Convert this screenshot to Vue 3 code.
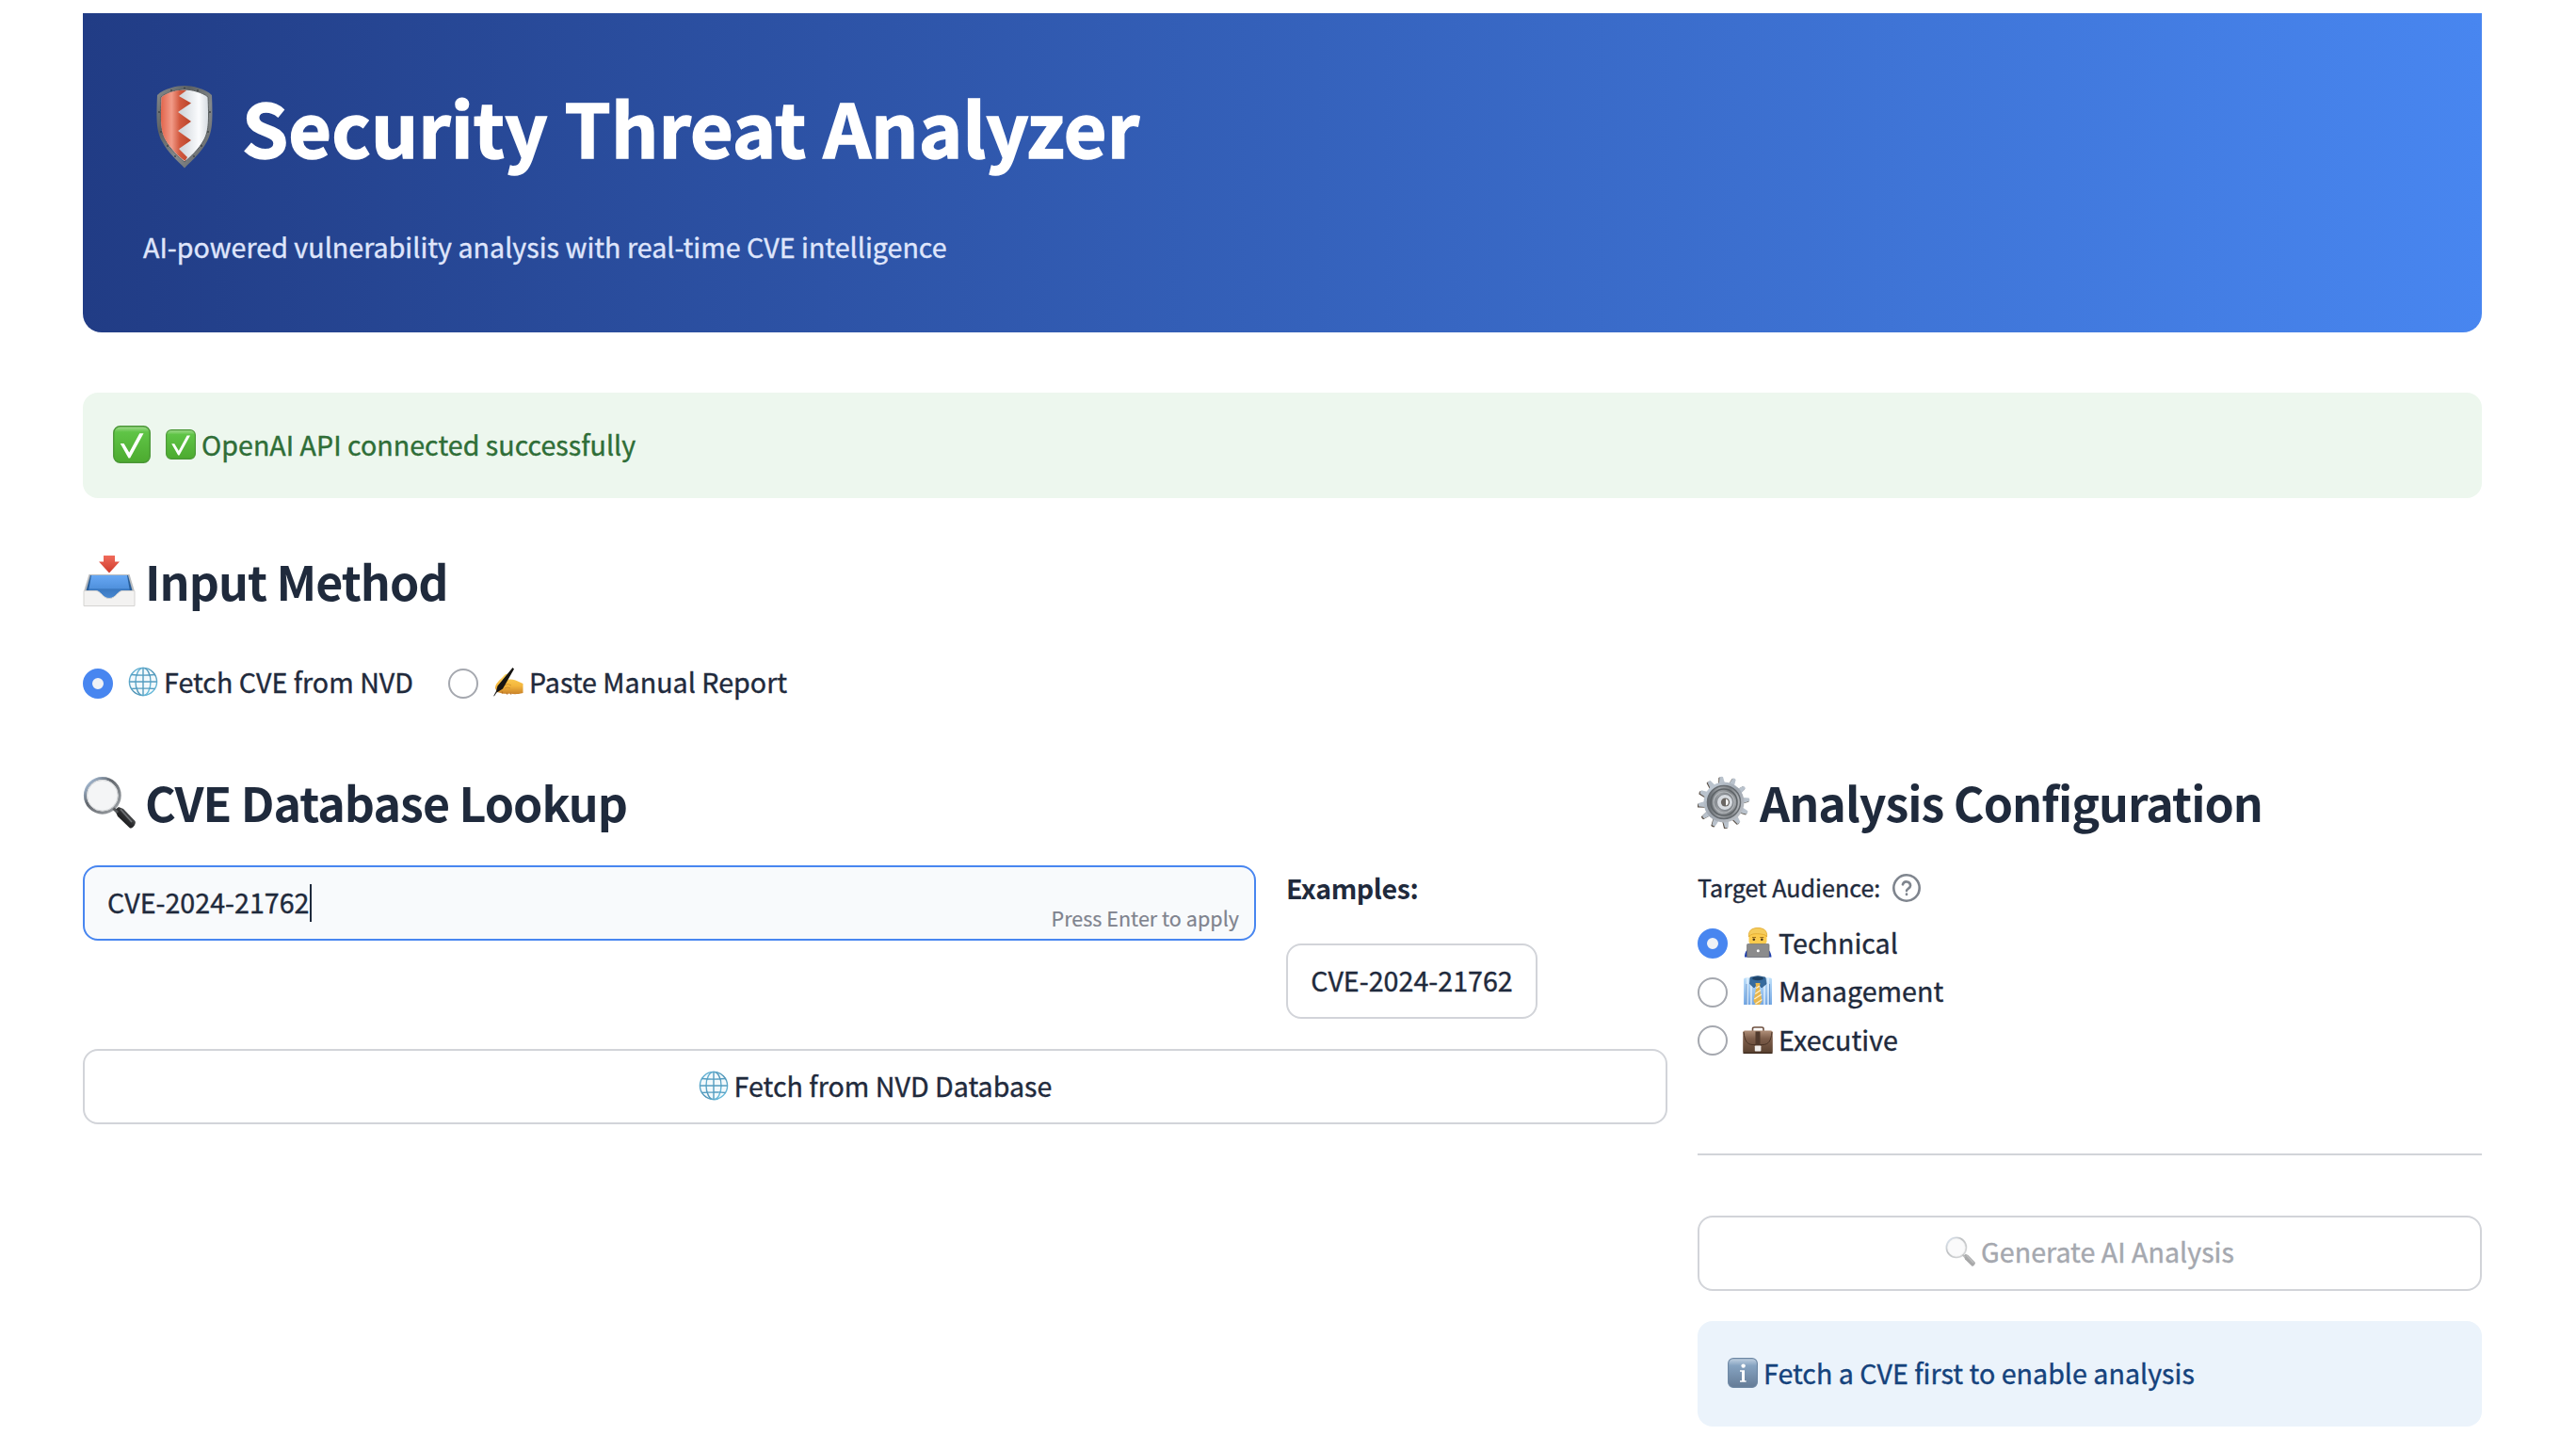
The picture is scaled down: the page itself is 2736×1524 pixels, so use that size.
<script setup>
import { ref } from 'vue'

const cve = ref('CVE-2024-21762')
const method = ref('nvd')
const audience = ref('technical')

const methods = [
  { id: 'nvd', icon: 'globe', label: 'Fetch CVE from NVD' },
  { id: 'manual', icon: 'writing', label: 'Paste Manual Report' },
]
const audiences = [
  { id: 'technical', icon: 'technologist', label: 'Technical' },
  { id: 'management', icon: 'shirt', label: 'Management' },
  { id: 'executive', icon: 'briefcase', label: 'Executive' },
]
const teeth = Array.from({ length: 12 }, (_, i) => i * 30 - 6)
</script>

<template>
  <svg class="defs" aria-hidden="true">
    <defs>
      <linearGradient id="gGreen" x1="0" y1="0" x2="0" y2="1">
        <stop offset="0" stop-color="#a5dd92" /><stop offset=".16" stop-color="#5fc446" /><stop offset="1" stop-color="#4caa2f" />
      </linearGradient>
      <linearGradient id="gInfo" x1="0" y1="0" x2="0" y2="1">
        <stop offset="0" stop-color="#c2d2e2" /><stop offset=".25" stop-color="#86a3c1" /><stop offset="1" stop-color="#647b96" />
      </linearGradient>
      <linearGradient id="gRed" x1="0" y1="0" x2="1" y2="0">
        <stop offset="0" stop-color="#e2654c" /><stop offset=".35" stop-color="#f29b88" /><stop offset=".62" stop-color="#d2593f" /><stop offset="1" stop-color="#b94429" />
      </linearGradient>
      <linearGradient id="gSilver" x1="0" y1="0" x2="1" y2="0">
        <stop offset="0" stop-color="#c2c8cd" /><stop offset=".45" stop-color="#d3d8dd" /><stop offset=".8" stop-color="#fbfcfe" /><stop offset="1" stop-color="#d5dae0" />
      </linearGradient>
      <linearGradient id="gRim" x1="0" y1="0" x2="1" y2="1">
        <stop offset="0" stop-color="#8b8f90" /><stop offset=".3" stop-color="#5c6163" /><stop offset=".6" stop-color="#85898b" /><stop offset="1" stop-color="#585c5e" />
      </linearGradient>
      <linearGradient id="gArrow" x1="0" y1="0" x2="0" y2="1">
        <stop offset="0" stop-color="#f06b5b" /><stop offset="1" stop-color="#cf3a2b" />
      </linearGradient>
      <linearGradient id="gTray" x1="0" y1="0" x2="0" y2="1">
        <stop offset="0" stop-color="#68a8f4" /><stop offset=".55" stop-color="#4f90dc" /><stop offset=".56" stop-color="#3a78c0" /><stop offset="1" stop-color="#4a8ad4" />
      </linearGradient>
      <linearGradient id="gGlobe" x1="0" y1="0" x2="1" y2="1">
        <stop offset="0" stop-color="#67b9dc" /><stop offset=".55" stop-color="#4f93b5" /><stop offset="1" stop-color="#74cdec" />
      </linearGradient>
      <linearGradient id="gHand" x1="0" y1="0" x2="0" y2="1">
        <stop offset="0" stop-color="#ffd65e" /><stop offset=".6" stop-color="#f3b53c" /><stop offset="1" stop-color="#c9822a" />
      </linearGradient>
      <linearGradient id="gHandle" x1="0" y1="1" x2="1" y2="0">
        <stop offset="0" stop-color="#050505" /><stop offset=".5" stop-color="#2a2b2d" /><stop offset="1" stop-color="#8a8c8e" />
      </linearGradient>
      <linearGradient id="gRing" x1="0" y1="0" x2="1" y2="1">
        <stop offset="0" stop-color="#b9d4f3" /><stop offset=".4" stop-color="#62676d" /><stop offset="1" stop-color="#a3a7ab" />
      </linearGradient>
      <linearGradient id="gGear" x1="0" y1="0" x2="1" y2="1">
        <stop offset="0" stop-color="#c9d4df" /><stop offset=".5" stop-color="#a0a7b0" /><stop offset="1" stop-color="#c3c6cb" />
      </linearGradient>
      <linearGradient id="gGearIn" x1="0" y1="0" x2="1" y2="0">
        <stop offset="0" stop-color="#60666c" /><stop offset=".35" stop-color="#9da1a5" /><stop offset=".7" stop-color="#7d8185" /><stop offset="1" stop-color="#b9bdc1" />
      </linearGradient>
      <linearGradient id="gCase" x1="0" y1="0" x2="0" y2="1">
        <stop offset="0" stop-color="#b08f78" /><stop offset=".35" stop-color="#7e5e4b" /><stop offset="1" stop-color="#58402f" />
      </linearGradient>
      <linearGradient id="gShirt" x1="0" y1="0" x2="0" y2="1">
        <stop offset="0" stop-color="#bfe0fb" /><stop offset="1" stop-color="#75a8e4" />
      </linearGradient>

      <symbol id="shield" viewBox="0 0 88 88">
        <path d="M44 0C36 0 22 3 15 10C14 36 14 48 20 59C26 71 36 79 44 87.500C52 79 62 71 68 59C74 48 74 36 73 10C66 3 52 0 44 0Z" fill="url(#gRim)" />
        <path d="M44 4C37 4 25 7 19 12C18 36 18 47 23 57C29 68 38 76 44 81C50 76 59 68 65 57C70 47 70 36 69 12C63 7 51 4 44 4Z" fill="url(#gSilver)" stroke="#5a5f61" stroke-width="1" />
        <path d="M46 5C37 4 25 7 19.500 12.500C18.500 36 18.500 47 23.500 57C29 67 38 75 44.500 80L47 76L38 67L51 58L37 48L51 38L37 28L51 18.500L38 11Z" fill="url(#gRed)" />
        <g fill="#3c4042"><circle cx="44" cy="2.500" r=".9" /><circle cx="30" cy="5" r=".9" /><circle cx="58" cy="5" r=".9" /><circle cx="17" cy="28" r=".9" /><circle cx="71" cy="28" r=".9" /><circle cx="19" cy="49" r=".9" /><circle cx="69" cy="49" r=".9" /><circle cx="26" cy="64" r=".9" /><circle cx="62" cy="64" r=".9" /><circle cx="34" cy="75" r=".9" /><circle cx="54" cy="75" r=".9" /></g>
      </symbol>

      <symbol id="check" viewBox="0 0 32 32">
        <rect x=".6" y=".6" width="30.800" height="30.800" rx="5.500" fill="url(#gGreen)" stroke="#4a9636" stroke-width="1.100" />
        <path d="M6.200 15.200H9.300L13.800 22.800L22.600 6.500H26L14.500 27.500H13.200Z" fill="#fff" />
      </symbol>

      <symbol id="info" viewBox="0 0 32 32">
        <rect x=".6" y=".6" width="30.800" height="30.800" rx="5.500" fill="url(#gInfo)" stroke="#6c86a3" stroke-width="1.100" />
        <circle cx="16.600" cy="8.600" r="2.200" fill="#fff" />
        <path d="M13 13.200H18V24.200H19.600V25.800H13V24.200H15V14.800H13Z" fill="#fff" />
      </symbol>

      <symbol id="inbox" viewBox="0 0 56 56">
        <path d="M6.500 21H49.500L55 39V47H1V39Z" fill="#b9bcbf" />
        <path d="M8 22H48L53 40H3Z" fill="#285d98" />
        <path d="M9 22H47L50 39L40 48H16L6 39Z" fill="url(#gTray)" />
        <path d="M1 38.500H14C19 38.500 21 46.500 28 46.500C35 46.500 37 38.500 42 38.500H55V54.500H1Z" fill="#f3f2f1" stroke="#d5d4d2" stroke-width="1" />
        <path d="M22 1H34V7.500H39L28 19.500L17 7.500H22Z" fill="url(#gArrow)" />
      </symbol>

      <symbol id="globe" viewBox="0 0 32 32">
        <circle cx="16" cy="16" r="14.800" fill="#f2f9fc" />
        <g fill="none" stroke="url(#gGlobe)" stroke-width="1.400">
          <circle cx="16" cy="16" r="14.600" /><ellipse cx="16" cy="16" rx="8" ry="14.600" />
        </g>
        <path d="M16 1.400V30.600M1.400 16H30.600M3.500 8.500Q16 9.800 28.500 8.500M3.500 23.500Q16 22.200 28.500 23.500" fill="none" stroke="#559dc0" stroke-width="1.400" />
      </symbol>

      <symbol id="writing" viewBox="0 0 32 32">
        <path d="M2 23C2 18 6 15 10 11C12 8 14 7 16 8C18 10 16 12 15 14C20 13 23 14 27 16L31.500 18V28C25 29.500 22 29.500 18 28.500C13 29.500 7 28 4 27Z" fill="url(#gHand)" />
        <path d="M9 26.500L10 28.500M14 28L15 29.500M18 28L19 29.500" stroke="#b56f22" stroke-width="1.200" fill="none" />
        <path d="M11 20Q16 17 19 20M12 23Q15 21 18 23" fill="none" stroke="#c98b2b" stroke-width=".8" />
        <path d="M20.500 1L22 2.500L10 23.500L3.500 27.500L.8 31.500L.3 31L3 26L4.500 20.500Z" fill="#161412" />
      </symbol>

      <symbol id="magnifier" viewBox="0 0 56 56">
        <path d="M34 36L38 33L43 35L55.500 48C57 51 53 56 50 55.500L37 43Z" fill="url(#gHandle)" />
        <path d="M40 35.500L52 49" stroke="#707376" stroke-width="1.600" fill="none" />
        <circle cx="20.800" cy="20.800" r="18.300" fill="#f4f5f6" stroke="url(#gRing)" stroke-width="3.200" />
        <circle cx="20.800" cy="20.800" r="16.300" fill="none" stroke="#d5d7d9" stroke-width="1" />
        <path d="M32.500 34.500L37 39" stroke="#55585b" stroke-width="3" />
      </symbol>

      <symbol id="gear" viewBox="0 0 56 56">
        <g fill="#5b5148" transform="translate(-1 .8)">
          <path v-for="a in teeth" :key="'s' + a" d="M25 10L26.200 .8Q28 -.2 29.800 .8L31 10Z" :transform="`rotate(${a} 28 28)`" />
        </g>
        <g fill="#b9c2cc">
          <path v-for="a in teeth" :key="a" d="M24.600 10L26.200 1Q28 0 29.800 1L31.400 10Z" :transform="`rotate(${a} 28 28)`" />
        </g>
        <circle cx="28" cy="28" r="21.500" fill="url(#gGear)" />
        <circle cx="28" cy="28" r="17.500" fill="url(#gGearIn)" stroke="#666b70" stroke-width="1.500" />
        <circle cx="28" cy="28" r="14" fill="none" stroke="#5f6468" stroke-width="1.600" />
        <circle cx="28" cy="28" r="11" fill="none" stroke="#b0b4b8" stroke-width="1.200" />
        <circle cx="29" cy="28" r="8.500" fill="#d7dbe0" stroke="#80858b" stroke-width="1" />
        <circle cx="29.500" cy="28" r="4.600" fill="#6a6663" />
        <path d="M30 24.500A3.600 3.600 0 0 1 30 31.500Z" fill="#fff" />
      </symbol>

      <symbol id="technologist" viewBox="0 0 32 32">
        <path d="M2 31.500C2 26 4 24 6 23H26C28 24 30 26 30.500 31.500Z" fill="#1f3fae" />
        <path d="M6.500 9C6 3 10 .5 16 .5C22 .5 26 3 25.500 9V15C25 21 7 21 6.500 15Z" fill="#fbcb4d" />
        <path d="M6.500 10C5.500 3 10 .5 16 .5C22 .5 26.500 3 25.500 10C24.500 7.500 22 7.500 19 7C15 6.500 8.500 6 6.500 10Z" fill="#f5cc5c" stroke="#d89c20" stroke-width=".6" />
        <circle cx="11.800" cy="12.800" r="1.300" fill="#4a3415" /><circle cx="20.300" cy="12.800" r="1.300" fill="#4a3415" />
        <path d="M10 10.500H14M18.300 10.500H22.300" stroke="#9b6d1b" stroke-width="1" />
        <rect x="4.500" y="17.500" width="23.500" height="14" rx="1" fill="#8b8b8c" stroke="#737374" stroke-width=".7" />
        <circle cx="16.300" cy="24.700" r="1.500" fill="#fff" />
      </symbol>

      <symbol id="shirt" viewBox="0 0 32 32">
        <path d="M1 4Q1 2.500 3 2.500H29Q31 2.500 31 4V31H1Z" fill="url(#gShirt)" />
        <path d="M5 3V31M9 3V31M23 3V31M27 3V31" stroke="#edf6fe" stroke-width="1.300" />
        <path d="M4 9V31M28.500 9V31" stroke="#5687c2" stroke-width=".7" />
        <path d="M8 2Q16 -1 24 2L25 9L20 13L16 8L12 13L7.500 9Z" fill="#376b9e" stroke="#244f7b" stroke-width=".6" />
        <ellipse cx="16" cy="3.200" rx="6" ry="2" fill="#1e4266" />
        <path d="M13.500 8H18.500L17.800 13L20.500 27L18 31H13.500L11.500 27L14.200 13Z" fill="#e8b64c" />
        <path d="M14.200 13.500L18 11M13.200 19.500L19 15.500M12.300 25L20 20M13.500 30L20.500 25.500" stroke="#fff0ca" stroke-width="1.300" />
      </symbol>

      <symbol id="briefcase" viewBox="0 0 32 32">
        <path d="M10.500 7V4.500Q10.500 3 12.500 3H20Q22 3 22 4.500V7" fill="none" stroke="#6e5040" stroke-width="1.600" />
        <rect x=".2" y="6.500" width="31.600" height="24.500" rx="2" fill="url(#gCase)" />
        <path d="M1 8C2 18 5 21 10 21.500H22C27 21 30 18 31 8" fill="none" stroke="#493326" stroke-width="1" />
        <path d="M13.500 7.500H18.500V22H13.500Z" fill="#513a2d" />
        <rect x="12.800" y="22.500" width="6.600" height="6" rx=".8" fill="#f0eeec" />
        <path d="M.5 30.300H31.500" stroke="#3c2a1f" stroke-width="1.200" />
      </symbol>
    </defs>
  </svg>

  <main class="page">
    <header class="hero">
      <h1><svg class="shield"><use href="#shield" /></svg><span>Security Threat Analyzer</span></h1>
      <p>AI-powered vulnerability analysis with real-time CVE intelligence</p>
    </header>

    <div class="alert success">
      <svg class="big"><use href="#check" /></svg>
      <svg class="emoji"><use href="#check" /></svg>
      <span>OpenAI API connected successfully</span>
    </div>

    <h2 class="h-input"><svg><use href="#inbox" /></svg><span>Input Method</span></h2>

    <div class="methods">
      <label v-for="m in methods" :key="m.id" class="radio" @click="method = m.id">
        <span class="dot" :class="{ on: method === m.id }"></span>
        <span class="lbl"><svg class="emoji"><use :href="'#' + m.icon" /></svg><span>{{ m.label }}</span></span>
      </label>
    </div>

    <div class="columns">
      <section class="left">
        <h2><svg><use href="#magnifier" /></svg><span>CVE Database Lookup</span></h2>
        <div class="lookup">
          <div class="field">
            <span class="value">{{ cve }}</span><span class="caret"></span>
            <span class="hint">Press Enter to apply</span>
          </div>
          <div class="examples">
            <strong>Examples:</strong>
            <button class="btn small">CVE-2024-21762</button>
          </div>
        </div>
        <button class="btn fetch"><svg class="emoji"><use href="#globe" /></svg><span>Fetch from NVD Database</span></button>
      </section>

      <section class="right">
        <h2><svg><use href="#gear" /></svg><span>Analysis Configuration</span></h2>
        <div class="audience">
          <span>Target Audience:</span>
          <svg class="help" viewBox="0 0 30 30">
            <circle cx="15" cy="15" r="13.700" />
            <path d="M10.900 11.300A4.200 4.200 0 0 1 19.100 12.500C19.100 15.200 15 16 15 18" />
            <path d="M15 21.600V21.900" />
          </svg>
        </div>
        <div class="options">
          <label v-for="a in audiences" :key="a.id" class="radio" @click="audience = a.id">
            <span class="dot" :class="{ on: audience === a.id }"></span>
            <span class="lbl"><svg class="emoji"><use :href="'#' + a.icon" /></svg><span>{{ a.label }}</span></span>
          </label>
        </div>
        <hr />
        <button class="btn generate" disabled><svg class="emoji"><use href="#magnifier" /></svg><span>Generate AI Analysis</span></button>
        <div class="alert note"><svg class="emoji"><use href="#info" /></svg><span>Fetch a CVE first to enable analysis</span></div>
      </section>
    </div>
  </main>
</template>

<style>
body {
  background: #fff;
}
</style>

<style scoped>
.defs {
  position: absolute;
  width: 0;
  height: 0;
}
.page {
  box-sizing: border-box;
  width: 2736px;
  height: 1524px;
  padding: 14px 100px 0 88px;
  overflow: hidden;
  font-family: "Noto Sans CJK SC", "Noto Sans", sans-serif;
  font-size: 28.6px;
  line-height: 32px;
  letter-spacing: 0.03px;
  color: #1f2a3c;
  white-space: nowrap;
  -webkit-text-stroke-width: 0.4px;
}
h1,
h2,
p {
  margin: 0;
}
svg {
  display: block;
  flex: none;
}
.hero {
  box-sizing: border-box;
  height: 339px;
  padding: 64px;
  border-radius: 0 0 20px 20px;
  background: linear-gradient(90deg, #213c85, #4886f0);
}
h1 {
  display: flex;
  align-items: center;
  gap: 17px;
  height: 112px;
  font-size: 78.8px;
  line-height: 112px;
  letter-spacing: 0.14px;
  -webkit-text-stroke-width: 1.6px;
  color: #fff;
}
.shield {
  width: 88px;
  height: 88px;
  margin-top: 2px;
}
.hero p {
  margin-top: 56px;
  color: #dfe5fb;
}
.alert {
  box-sizing: border-box;
  display: flex;
  align-items: center;
  height: 112px;
  padding: 0 32px 3px;
  border-radius: 16px;
}
.success {
  margin-top: 64px;
  background: #edf7ee;
  color: #2f6e37;
}
.big {
  width: 40px;
  height: 40px;
  margin-right: 16px;
}
.emoji {
  width: 32px;
  height: 32px;
  margin-right: 6px;
}
h2 {
  display: flex;
  align-items: center;
  gap: 11px;
  height: 60px;
  font-size: 50.1px;
  line-height: 60px;
  font-weight: 600;
  letter-spacing: -0.97px;
  -webkit-text-stroke-width: 0;
}
h2 svg {
  width: 56px;
  height: 56px;
}
h2 span {
  margin-left: -1px;
  padding-bottom: 2px;
}
.h-input {
  margin-top: 58px;
}
.methods {
  display: flex;
  gap: 37px;
  margin-top: 63px;
}
.radio {
  display: flex;
  align-items: center;
  gap: 16px;
  height: 32px;
}
.dot {
  box-sizing: border-box;
  width: 32px;
  height: 32px;
  border: 2px solid #a5a8af;
  border-radius: 50%;
}
.dot.on {
  border: 10px solid #4886f0;
  background: #f0f2f6;
}
.lbl {
  display: flex;
  align-items: center;
  padding-bottom: 4px;
}
.options .lbl {
  padding-bottom: 3px;
}
.columns {
  display: flex;
  gap: 32px;
  margin-top: 80px;
}
.left {
  width: 1683px;
}
.right {
  width: 833px;
}
.lookup {
  display: flex;
  gap: 32px;
  height: 163px;
  margin-top: 37px;
}
.field {
  position: relative;
  box-sizing: border-box;
  display: flex;
  align-items: center;
  width: 1246px;
  height: 80px;
  padding: 0 24px;
  border: 2px solid #4886f0;
  border-radius: 16px;
  background: #f8fafc;
}
.value {
  padding-bottom: 2px;
}
.caret {
  width: 2px;
  height: 40px;
  background: #1f2a3c;
}
.hint {
  position: absolute;
  right: 16px;
  bottom: 6px;
  font-size: 21.5px;
  -webkit-text-stroke-width: 0.2px;
  color: #7f838e;
}
.examples {
  display: flex;
  flex-direction: column;
  align-items: flex-start;
  gap: 43px;
  padding-top: 8px;
}
strong {
  font-weight: 600;
  letter-spacing: -0.4px;
  -webkit-text-stroke-width: 0;
}
.btn {
  box-sizing: border-box;
  display: flex;
  align-items: center;
  justify-content: center;
  width: 100%;
  height: 80px;
  padding: 0 0 3px;
  border: 2px solid #d2d4d9;
  border-radius: 16px;
  background: #fff;
  font: inherit;
  letter-spacing: inherit;
  color: inherit;
}
.btn.small {
  width: 267px;
}
.fetch {
  margin-top: 32px;
}
.audience {
  display: flex;
  align-items: center;
  gap: 13px;
  height: 30px;
  margin-top: 46px;
  font-size: 25.07px;
}
.audience span {
  padding-bottom: 2px;
}
.help {
  width: 30px;
  height: 30px;
  fill: none;
  stroke: #7f858e;
  stroke-width: 2.6;
  stroke-linecap: round;
}
.options {
  display: flex;
  flex-direction: column;
  gap: 19.5px;
  margin-top: 28px;
}
hr {
  height: 2px;
  margin: 104px 0 64px;
  border: 0;
  background: #d2d4d9;
}
.btn.generate {
  padding-bottom: 4px;
  color: #a5a8af;
}
.generate .emoji {
  opacity: 0.4;
}
.note {
  margin-top: 32px;
  background: #ebf3fb;
  color: #14427c;
}
</style>
